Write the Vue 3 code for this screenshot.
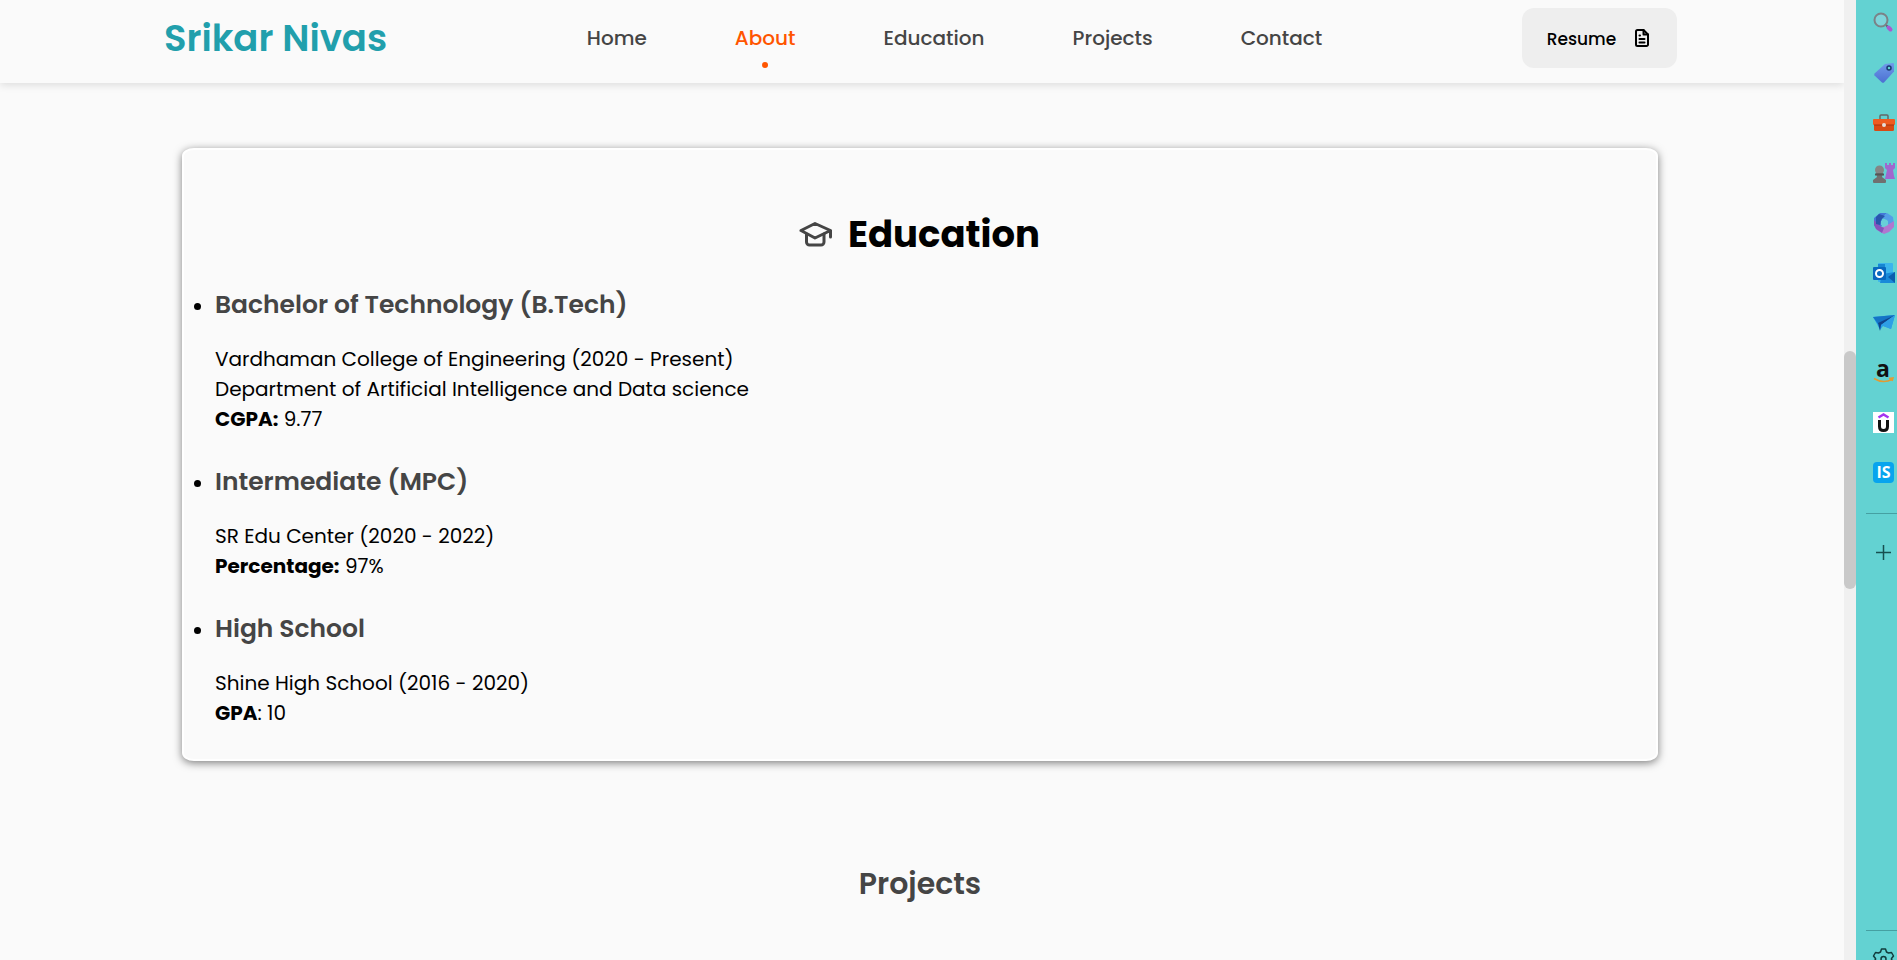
<script setup>
const links = ['Home', 'About', 'Education', 'Projects', 'Contact']
const active = 'About'

const schools = [
  {
    title: 'Bachelor of Technology (B.Tech)',
    lines: [
      'Vardhaman College of Engineering (2020 - Present)',
      'Department of Artificial Intelligence and Data science',
    ],
    label: 'CGPA:',
    score: ' 9.77',
  },
  {
    title: 'Intermediate (MPC)',
    lines: ['SR Edu Center (2020 - 2022)'],
    label: 'Percentage:',
    score: ' 97%',
  },
  {
    title: 'High School',
    lines: ['Shine High School (2016 - 2020)'],
    label: 'GPA',
    score: ': 10',
  },
]
</script>

<template>
  <div class="window">
    <div class="page">
      <header class="header">
        <div class="bar">
          <a class="logo" href="#home">Srikar Nivas</a>
          <nav class="nav">
            <a
              v-for="link in links"
              :key="link"
              :href="'#' + link.toLowerCase()"
              class="link"
              :class="{ active: link === active }"
            >{{ link }}</a>
          </nav>
          <button class="resume" type="button">
            <span>Resume</span>
            <svg width="16" height="20" viewBox="0 0 16 20" fill="none" stroke="#000" stroke-width="2" stroke-linejoin="round" stroke-linecap="round" aria-hidden="true">
              <path d="M3.5 2H9.5L14 6.500V16.500a1.500 1.500 0 0 1-1.500 1.500H3.500A1.500 1.500 0 0 1 2 16.500V3.500A1.500 1.500 0 0 1 3.500 2Z" />
              <path d="M9.500 2V6.500H14M5.500 11H10.500M5.500 14.500H10.500M5.500 7.500H6" />
            </svg>
          </button>
        </div>
      </header>

      <main class="main">
        <section id="education" class="card">
          <h1 class="title">
            <svg width="34" height="34" viewBox="0 0 34 34" fill="none" stroke="#454545" stroke-width="3" stroke-linejoin="round" stroke-linecap="round" aria-hidden="true">
              <path d="M2 13.500 16 6.500 31.500 13.500 16 21ZM31.500 13.500V20" />
              <path d="M7.500 17V25a3 3 0 0 0 3 3H22a3 3 0 0 0 3-3V17" />
            </svg>
            <span>Education</span>
          </h1>
          <ul class="schools">
            <li v-for="school in schools" :key="school.title" class="school">
              <h3 class="degree">{{ school.title }}</h3>
              <p class="detail">
                <template v-for="line in school.lines" :key="line">{{ line }}<br></template>
                <strong>{{ school.label }}</strong>{{ school.score }}
              </p>
            </li>
          </ul>
        </section>
        <h2 id="projects" class="projects">Projects</h2>
      </main>
    </div>

    <div class="scroll"><div class="thumb"></div></div>

    <aside class="side" aria-label="Sidebar">
      <div class="tools">
        <button class="tool" type="button" aria-label="Search">
          <svg width="22" height="22" viewBox="0 0 22 22" fill="none">
            <path d="M13 13L16 16" stroke="#5d6670" stroke-width="2" />
            <circle cx="8" cy="8" r="6.500" fill="#7fd5db" stroke="#7b8287" stroke-width="2" />
            <path d="M15.500 15.500L17.500 17.500" stroke="#a85bd0" stroke-width="4" stroke-linecap="round" />
          </svg>
        </button>
        <button class="tool" type="button" aria-label="Shopping">
          <svg width="22" height="22" viewBox="0 0 22 22">
            <defs><linearGradient id="tag" x1="0" y1="0" x2="0" y2="1"><stop stop-color="#6f9bea" /><stop offset="1" stop-color="#4c70d2" /></linearGradient></defs>
            <path d="M12 2 20 1Q21 1 21 2V9.500L11 20.500Q10 21 9 20.500L1.500 13.500Q1 12.500 1.500 11.500Z" fill="url(#tag)" />
            <circle cx="16" cy="6" r="2" fill="#63d2d2" stroke="#183b70" stroke-width="1.500" />
          </svg>
        </button>
        <button class="tool" type="button" aria-label="Tools">
          <svg width="22" height="22" viewBox="0 0 22 22">
            <path d="M7 7V4Q7 3 8 3H14Q15 3 15 4V7" fill="none" stroke="#676767" stroke-width="1.500" />
            <rect x="1" y="10" width="20" height="9" rx="1.500" fill="#d84a14" />
            <rect x="0" y="7" width="22" height="6" rx="1" fill="#ef5b20" />
            <path d="M1 13H21" stroke="#a63510" />
            <circle cx="11" cy="13" r="2" fill="#e6dedb" />
          </svg>
        </button>
        <button class="tool" type="button" aria-label="Games">
          <svg width="22" height="22" viewBox="0 0 22 22">
            <path d="M12 1H14V3H16V1H18V3H20V1H22V6L20 8 21 14 22 17H12L14 8 12 6Z" fill="#a067cf" />
            <circle cx="6.500" cy="8" r="4.500" fill="#858585" />
            <path d="M3 11H10L9 15 13 18V20Q13 21 12 21H1Q0 21 0 20V18L4 15Z" fill="#707070" />
            <path d="M2 12.500H11" stroke="#565656" stroke-width="2" />
          </svg>
        </button>
        <button class="tool" type="button" aria-label="Microsoft 365">
          <svg width="22" height="22" viewBox="0 0 22 22">
            <path d="M7 1H14L9 6V14L4 17 1 13V6Z" fill="#4478d8" />
            <path d="M14 1 20 5 21 13 16 15 14 8 8 6Z" fill="#539ee8" />
            <path d="M21 9V15L16 20 11 22 4 18 2 15 10 15 16 12Z" fill="#b077d0" />
            <path d="M1 8 7 14 11 16 9 21 3 17 1 13Z" fill="#8654bc" />
            <path d="M6 2 12 4 8 8 7 13 3 12V5Z" fill="#2856ab" />
            <path d="M11 7 15 9V13L11 15 8 13V9Z" fill="#68d0d8" />
          </svg>
        </button>
        <button class="tool" type="button" aria-label="Outlook">
          <svg width="22" height="22" viewBox="0 0 22 22">
            <rect x="5" y="1" width="15" height="19" rx="1" fill="#3cb5ed" />
            <path d="M5 2H12V10H5Z" fill="#1786d2" />
            <path d="M9 12 22 10V21H7Z" fill="#198ad9" />
            <path d="M15 15 22 10V21Z" fill="#0b5dad" />
            <rect x="0" y="5" width="13" height="13" rx="1" fill="#0868bf" />
            <circle cx="6.500" cy="11.500" r="3.500" fill="none" stroke="#fff" stroke-width="2" />
          </svg>
        </button>
        <button class="tool" type="button" aria-label="Drop">
          <svg width="22" height="22" viewBox="0 0 22 22">
            <path d="M0 5 22 3 18 17 10 14 7 18 4 12Z" fill="#259eea" />
            <path d="M0 5 22 3 5 12Z" fill="#1574c6" />
            <path d="M5 11 22 3 8 13 7 19Z" fill="#11448b" />
            <path d="M8 13 22 3 18 17Z" fill="#2f9fe6" />
          </svg>
        </button>
        <button class="tool" type="button" aria-label="Amazon">
          <svg width="22" height="22" viewBox="0 0 22 22">
            <text class="letter" x="10" y="15" font-size="23" text-anchor="middle">a</text>
            <path d="M1 16.500Q10 22 19 17.500M16 16.500 20 16 19 19" fill="none" stroke="#e39b32" stroke-width="1.500" />
          </svg>
        </button>
        <button class="tool" type="button" aria-label="Udemy">
          <svg width="22" height="22" viewBox="0 0 22 22">
            <rect width="21" height="21" fill="#fff" />
            <path d="M5.500 5.500 10.500 2.500 15.500 5.500" fill="none" stroke="#a435f0" stroke-width="2.500" />
            <path d="M6.500 8V14.500Q6.500 18.500 10.500 18.500T14.500 14.500V8" fill="none" stroke="#111" stroke-width="3" />
          </svg>
        </button>
        <button class="tool" type="button" aria-label="IS">
          <svg width="22" height="22" viewBox="0 0 22 22">
            <rect width="21" height="21" rx="4" fill="#08a4ee" />
            <text class="letter light" x="10.500" y="16" font-size="16" text-anchor="middle">IS</text>
          </svg>
        </button>
      </div>
      <button class="tool add" type="button" aria-label="Add">
        <svg width="22" height="22" viewBox="0 0 22 22" stroke="#174f50" stroke-width="1.500"><path d="M3 10.500H18M10.500 3V18" /></svg>
      </button>
      <div class="foot">
        <button class="gear" type="button" aria-label="Settings">
          <svg width="22" height="22" viewBox="0 0 22 22" fill="none" stroke="#123c3d" stroke-width="1.500" stroke-linejoin="round">
            <path d="M8.500 1H12.500L13.500 4 15.500 5 18.500 4.500 20.500 8 18.500 10.500V11.500L20.500 14 18.500 17.500 15.500 17 13.500 18 12.500 21H8.500L7.500 18 5.500 17 2.500 17.500.5 14 2.500 11.500V10.500L.5 8 2.500 4.500 5.500 5 7.500 4Z" />
            <circle cx="10.500" cy="11" r="2.500" />
          </svg>
        </button>
      </div>
    </aside>
  </div>
</template>

<style>
body {
  margin: 0;
  background: #fafafa;
}
</style>

<style scoped>
.window {
  display: flex;
  height: 100vh;
  overflow: hidden;
  font-family: Poppins, Inter, "Open Sans", sans-serif;
  color: #000;
}
.page {
  flex: 1;
  min-width: 0;
  overflow: hidden;
  background: #fafafa;
}
.header {
  height: 83px;
  box-shadow: 0 2px 8px rgba(0, 0, 0, 0.12);
}
.bar {
  display: flex;
  justify-content: space-between;
  align-items: center;
  height: 76px;
  margin: 0 167px 0 164px;
}
.logo {
  color: #219fac;
  font-size: 37px;
  font-weight: 600;
  text-decoration: none;
}
.nav {
  display: flex;
  gap: 88px;
}
.link {
  position: relative;
  color: #454545;
  font-size: 20px;
  font-weight: 500;
  line-height: 30px;
  text-decoration: none;
}
.active {
  color: #ff5500;
}
.active::after {
  content: "";
  position: absolute;
  left: 50%;
  bottom: -15px;
  width: 6px;
  height: 6px;
  margin-left: -3px;
  border-radius: 50%;
  background: #ff5500;
}
.resume {
  display: flex;
  justify-content: center;
  align-items: center;
  gap: 18px;
  width: 155px;
  height: 60px;
  padding: 2px 2px 0 0;
  border: 0;
  border-radius: 12px;
  background: #eee;
  color: #000;
  font: inherit;
  font-size: 17px;
  font-weight: 500;
}
.resume svg {
  margin-bottom: 2px;
}
.card {
  box-sizing: border-box;
  margin: 65px 186px 0 182px;
  padding: 54px 32px 31px 31px;
  border: 2px solid #fff;
  border-radius: 12px / 8px;
  background: #fafafa;
  box-shadow: 0 2px 8px rgba(0, 0, 0, 0.5);
}
.title {
  display: flex;
  justify-content: center;
  align-items: center;
  gap: 15px;
  margin: 0 0 23px;
  font-size: 37px;
  font-weight: 700;
  line-height: 60px;
}
.schools {
  display: grid;
  gap: 30px;
  margin: 0;
  padding: 0;
  list-style: none;
}
.school {
  position: relative;
}
.school::before {
  content: "";
  position: absolute;
  left: -21px;
  top: 16px;
  width: 7px;
  height: 7px;
  border-radius: 50%;
  background: #000;
}
.degree {
  margin: 0 0 21px;
  color: #454545;
  font-size: 25px;
  font-weight: 600;
  line-height: 36px;
}
.detail {
  margin: 0;
  font-size: 20px;
  line-height: 30px;
}
.projects {
  margin: 99px 4px 0 0;
  color: #454545;
  font-size: 30px;
  font-weight: 600;
  line-height: 48px;
  text-align: center;
}
.scroll {
  width: 12px;
  background: #f0f0f0;
}
.thumb {
  height: 238px;
  margin-top: 351px;
  border-radius: 6px;
  background: #c9c9c9;
}
.side {
  display: flex;
  flex-direction: column;
  width: 41px;
  overflow: hidden;
  background: #63d2d2;
}
.tools {
  display: grid;
  gap: 4px;
}
.tool {
  display: flex;
  align-items: center;
  height: 46px;
  padding: 0 0 0 17px;
  border: 0;
  background: none;
}
.add {
  position: relative;
  height: 80px;
  margin-top: 17px;
}
.add::before,
.foot {
  border-top: 1px solid #45a0a2;
}
.add::before {
  content: "";
  position: absolute;
  top: 0;
  left: 10px;
  right: 0;
}
.foot {
  height: 29px;
  margin: auto 0 0 10px;
}
.gear {
  display: block;
  padding: 17px 0 0 7px;
  border: 0;
  background: none;
}
.tool svg,
.gear svg {
  flex: none;
  overflow: visible;
}
.letter {
  font-family: "Open Sans", sans-serif;
  font-weight: 700;
  fill: #111;
}
.light {
  fill: #fff;
}
</style>
